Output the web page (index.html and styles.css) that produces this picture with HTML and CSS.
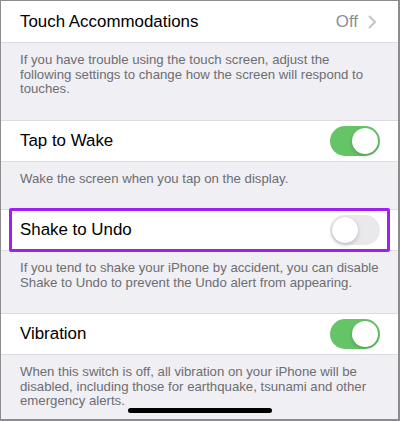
FILE: index.html
```html
<!DOCTYPE html>
<html>
<head>
<meta charset="utf-8">
<link rel="stylesheet" href="styles.css">
</head>
<body>
<div class="screen">
  <div class="row first">
    <span class="label">Touch Accommodations</span>
    <span class="detail">Off
      <svg class="chev" width="9" height="14" viewBox="0 0 9 14"><path d="M1.5 1.5 L7 7 L1.5 12.5" fill="none" stroke="#c4c4c8" stroke-width="2" stroke-linecap="round" stroke-linejoin="round"/></svg>
    </span>
  </div>
  <div class="footer">If you have trouble using the touch screen, adjust the<br>following settings to change how the screen will respond to<br>touches.</div>

  <div class="row">
    <span class="label">Tap to Wake</span>
    <span class="toggle on"><span class="knob"></span></span>
  </div>
  <div class="footer">Wake the screen when you tap on the display.</div>

  <div class="row highlighted">
    <span class="label">Shake to Undo</span>
    <span class="toggle off"><span class="knob"></span></span>
    <span class="mark"></span>
  </div>
  <div class="footer">If you tend to shake your iPhone by accident, you can disable<br>Shake to Undo to prevent the Undo alert from appearing.</div>

  <div class="row">
    <span class="label">Vibration</span>
    <span class="toggle on"><span class="knob"></span></span>
  </div>
  <div class="footer">When this switch is off, all vibration on your iPhone will be<br>disabled, including those for earthquake, tsunami and other<br>emergency alerts.</div>

  <div class="home"></div>
</div>
</body>
</html>
```

FILE: styles.css
```css
html, body {
  margin: 0;
  padding: 0;
}
body {
  font-family: "Liberation Sans", Arial, sans-serif;
}
.screen {
  position: relative;
  width: 400px;
  height: 421px;
  box-sizing: border-box;
  border-style: solid;
  border-color: #8c8c8c;
  border-width: 1px 2px 2px 1px;
  background: #efeff4;
  overflow: hidden;
}
.row {
  position: relative;
  height: 42px;
  box-sizing: border-box;
  background: #ffffff;
  border-top: 1px solid #dcdce0;
  border-bottom: 1px solid #dcdce0;
  display: flex;
  align-items: center;
  justify-content: space-between;
  padding: 0 18px 0 19px;
}
.row.first {
  border-top: none;
}
.label {
  font-size: 16.9px;
  color: #000;
}
.detail {
  display: flex;
  align-items: center;
  gap: 10px;
  font-size: 16.9px;
  color: #8e8e93;
  padding-right: 3px;
}
.chev {
  display: block;
}
.footer {
  padding: 10px 8px 23px 19px;
  font-size: 13.2px;
  line-height: 14.5px;
  color: #6d6d72;
  white-space: nowrap;
}
.toggle {
  position: relative;
  width: 50px;
  height: 30px;
  border-radius: 15px;
  box-sizing: border-box;
}
.toggle.on {
  background: #65c466;
}
.toggle.off {
  background: #e9e9eb;
}
.knob {
  position: absolute;
  top: 2px;
  width: 26px;
  height: 26px;
  border-radius: 50%;
  background: #fff;
  box-shadow: 0 2px 4px rgba(0,0,0,0.18), 0 0 1px rgba(0,0,0,0.15);
}
.toggle.on .knob {
  right: 2px;
}
.toggle.off .knob {
  left: 2px;
}
.mark {
  position: absolute;
  top: -2px;
  bottom: -2px;
  left: 8px;
  right: 8px;
  border: 3px solid #a21ff2;
  border-radius: 2px;
  pointer-events: none;
}
.home {
  position: absolute;
  left: 127px;
  bottom: 6px;
  width: 144px;
  height: 5px;
  border-radius: 3px;
  background: #000;
}
```
